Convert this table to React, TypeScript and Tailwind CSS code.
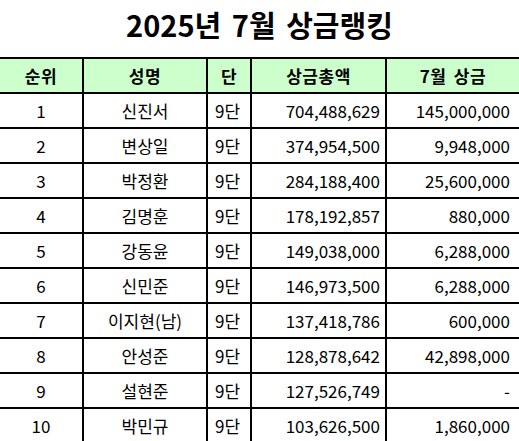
const rows = [
  ["1", "신진서", "9단", "704,488,629", "145,000,000"],
  ["2", "변상일", "9단", "374,954,500", "9,948,000"],
  ["3", "박정환", "9단", "284,188,400", "25,600,000"],
  ["4", "김명훈", "9단", "178,192,857", "880,000"],
  ["5", "강동윤", "9단", "149,038,000", "6,288,000"],
  ["6", "신민준", "9단", "146,973,500", "6,288,000"],
  ["7", "이지현(남)", "9단", "137,418,786", "600,000"],
  ["8", "안성준", "9단", "128,878,642", "42,898,000"],
  ["9", "설현준", "9단", "127,526,749", "-"],
  ["10", "박민규", "9단", "103,626,500", "1,860,000"],
];

const cols = "grid grid-cols-[82px_124px_44px_135px_1fr]";

export default function App() {
  return (
    <div
      className="w-[519px] h-[441px] overflow-hidden bg-white text-black"
      style={{ fontFamily: '"Noto Sans CJK KR", "Noto Sans", sans-serif' }}
    >
      <h1 className="h-[57px] pb-[7px] flex items-center justify-center text-[29px] font-bold [word-spacing:4px]">
        2025년 7월 상금랭킹
      </h1>
      <div className="border-t-2 border-black">
        <div className={`${cols} h-[35px] bg-[#ccffcc] border-b-2 border-black text-[17px] font-bold tracking-[0.5px] [word-spacing:3px]`}>
          <div className="flex items-center justify-center">순위</div>
          <div className="flex items-center justify-center border-l-2 border-black">성명</div>
          <div className="flex items-center justify-center border-l-2 border-black">단</div>
          <div className="flex items-center justify-center border-l-2 border-black">상금총액</div>
          <div className="flex items-center justify-center border-l-2 border-black">7월 상금</div>
        </div>
        {rows.map((r) => (
          <div key={r[0]} className={`${cols} h-[35px] border-b-2 border-black text-[17px]`}>
            <div className="flex items-center justify-center">{r[0]}</div>
            <div className="flex items-center justify-center border-l-2 border-black">{r[1]}</div>
            <div className="flex items-center pl-[7px] border-l-2 border-black">{r[2]}</div>
            <div className="flex items-center justify-end pr-[5px] border-l-2 border-black">{r[3]}</div>
            <div className="flex items-center justify-end pr-[9px] border-l-2 border-black">{r[4]}</div>
          </div>
        ))}
      </div>
    </div>
  );
}
